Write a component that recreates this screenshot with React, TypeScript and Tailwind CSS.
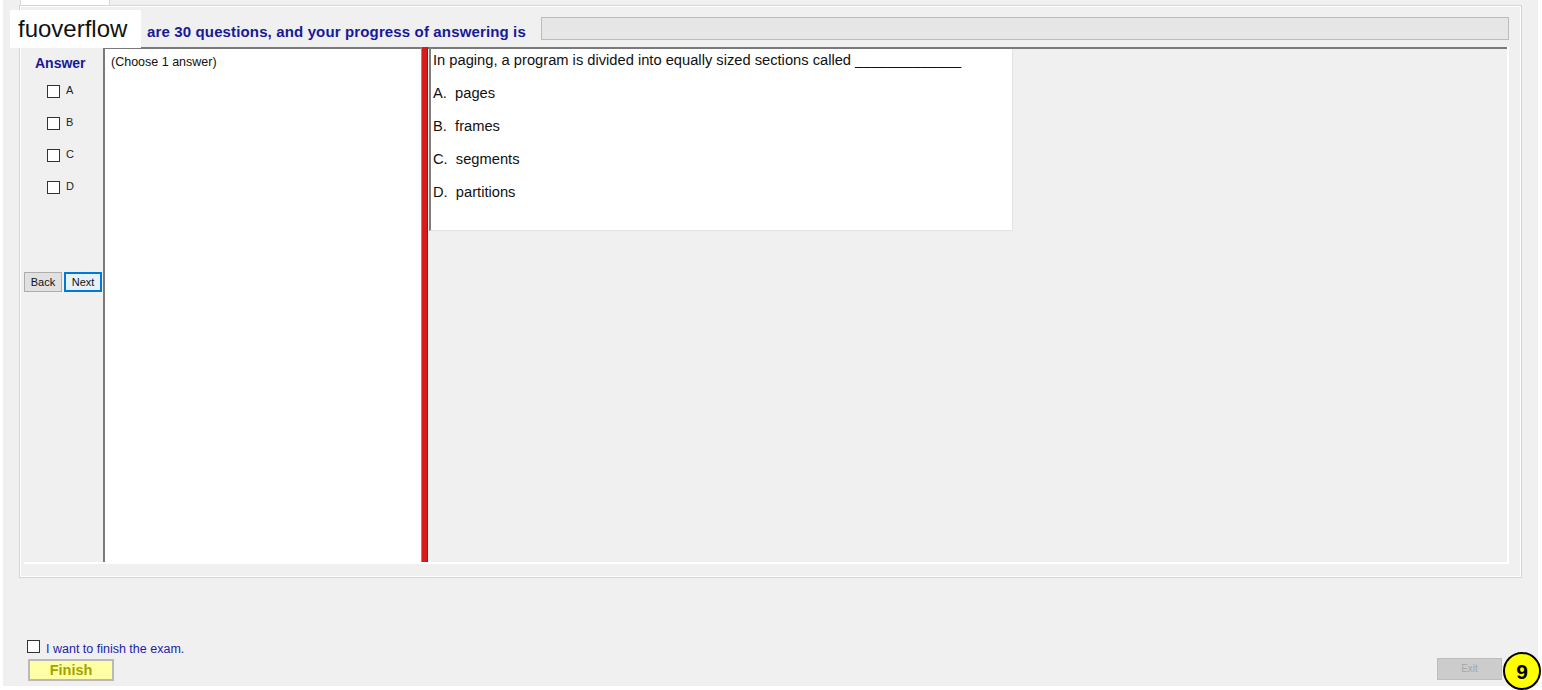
import React from 'react';

const choices = ['A', 'B', 'C', 'D'];
const options = [
  { key: 'A', text: 'pages' },
  { key: 'B', text: 'frames' },
  { key: 'C', text: 'segments' },
  { key: 'D', text: 'partitions' },
];

const App = () => {
  return (
    <div className="relative h-[690px] w-[1542px] overflow-hidden bg-white font-['Liberation_Sans',Arial,sans-serif] text-black">
      <div className="ml-[3px] flex h-[686px] w-[1535px] flex-col bg-[#f0f0f0]">
        {/* Tab control */}
        <div className="ml-[16px] flex w-[1503px] flex-col">
          <div className="flex h-[5px]">
            <div className="ml-[1px] h-[5px] w-[90px] border-x border-[#d9d9d9] bg-white" />
          </div>
          <div className="flex h-[573px] flex-col border border-[#d6d6d6] shadow-[inset_1px_1px_0_#fff,inset_-1px_-1px_0_#fff]">
            {/* Header row */}
            <div className="mt-[11px] grid h-[23px] grid-cols-[521px_1fr]">
              <div className="pl-[127px]">
                <div className="mt-[6px] whitespace-nowrap text-[15px] font-bold leading-[17px] tracking-[0.14px] text-[#16199a]">
                  are 30 questions, and your progress of answering is
                </div>
              </div>
              <div className="mr-[12px] h-[23px] border border-[#bcbcbc] bg-[#e6e6e6]" />
            </div>

            {/* Main area */}
            <div className="ml-[4px] mr-[12px] mt-[7px] flex h-[517px] border-b-2 border-r-2 border-white">
              {/* Answer column */}
              <div className="flex w-[79px] flex-col">
                <div className="pl-[11px] pt-[8px] text-[14px] font-bold leading-[16px] text-[#16199a]">Answer</div>
                <div className="mt-[14px] flex flex-col">
                  {choices.map((c) => (
                    <div key={c} className="flex h-[32px] items-start pl-[23px]">
                      <span className="h-[13px] w-[13px] border border-[#333] bg-white" />
                      <span className="ml-[6px] mt-[-1px] text-[11px] leading-[13px] text-[#222]">{c}</span>
                    </div>
                  ))}
                </div>
                <div className="mt-[59px] flex gap-[2px]">
                  <button className="h-[20px] w-[38px] border border-[#adadad] bg-[#e1e1e1] text-[11px] leading-[18px] text-[#111]">
                    Back
                  </button>
                  <button className="h-[20px] w-[38px] border-2 border-[#0078d7] bg-[#e5f1fb] text-[11px] leading-[16px] text-[#111]">
                    Next
                  </button>
                </div>
              </div>

              {/* Choose box */}
              <div className="w-[318px] border-l-2 border-t-2 border-[#7a7a7a] bg-white pl-[6px] pt-[6px] text-[12.5px] leading-[15px] text-[#111]">
                (Choose 1 answer)
              </div>

              {/* Splitter */}
              <div className="w-[7px] border-l border-r border-l-[#ee6a6a] border-r-[#a81010] bg-[#d81c1c]" />

              {/* Question panel */}
              <div className="flex-1 border-t-2 border-[#7a7a7a]">
                <div className="ml-[1px] h-[182px] w-[584px] border-b border-l-2 border-r border-b-[#e3e3e3] border-l-[#7f7f7f] border-r-[#e3e3e3] bg-white pl-[2px] pt-[2px] text-[14.7px] text-[#111]">
                  <div className="whitespace-pre leading-[18px]">
                    In paging, a program is divided into equally sized sections called _____________
                  </div>
                  <div className="mt-[8px]">
                    {options.map((o) => (
                      <div key={o.key} className="h-[33px] whitespace-pre leading-[33px]">
                        {o.key}.  {o.text}
                      </div>
                    ))}
                  </div>
                </div>
              </div>
            </div>
          </div>
        </div>

        {/* Bottom area */}
        <div className="flex flex-1 flex-col">
          <div className="ml-[24px] mt-[62px] flex h-[13px] items-start">
            <span className="h-[13px] w-[13px] border border-[#333] bg-white" />
            <span className="ml-[6px] mt-[3px] text-[12.5px] leading-[13px] text-[#1e1ea8]">I want to finish the exam.</span>
          </div>
          <div className="mt-[6px] flex items-start justify-between">
            <button className="ml-[25px] h-[22px] w-[86px] border-2 border-[#b9b9b9] bg-[#ffffa6] text-[14.5px] font-bold leading-[18px] text-[#a3a300]">
              Finish
            </button>
            <button className="mr-[36px] mt-[-1px] h-[22px] w-[65px] border border-[#bdbdbd] bg-[#cccccc] text-[10px] leading-[20px] text-[#a6a6a6]">
              Exit
            </button>
          </div>
        </div>
      </div>

      {/* Watermark */}
      <div className="absolute left-[10px] top-[10px] h-[38px] w-[131px] bg-white pl-[8px] text-[24px] leading-[38px] text-[#111]">
        fuoverflow
      </div>

      {/* Page badge */}
      <div className="absolute left-[1503px] top-[652px] flex h-[38px] w-[38px] items-center justify-center rounded-full border-2 border-black bg-[#ffff00] text-[21px] font-bold leading-none">
        9
      </div>
    </div>
  );
};

export default App;
